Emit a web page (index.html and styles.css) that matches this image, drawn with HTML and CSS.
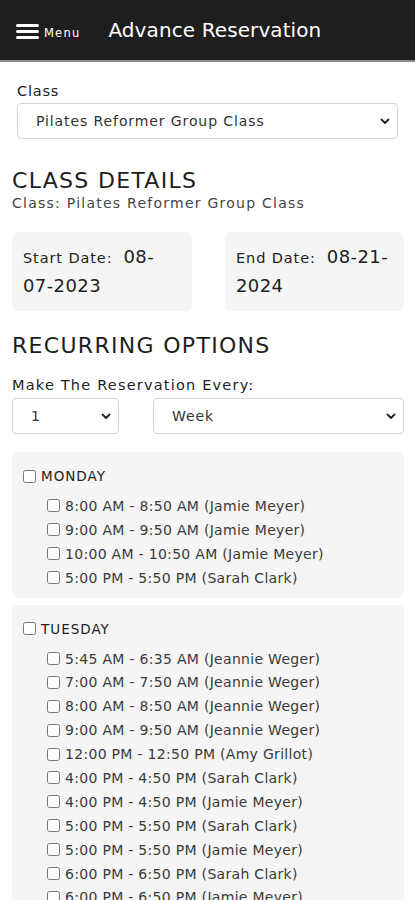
FILE: index.html
```html
<!DOCTYPE html>
<html lang="en">
<head>
  <meta charset="UTF-8" />
  <meta name="viewport" content="width=device-width, initial-scale=1.0" />
  <title>Advance Reservation</title>
  <link rel="stylesheet" href="styles.css">
</head>
<body>

  <header class="topbar">
    <div class="menu-btn">
      <svg class="burger" width="23" height="15" viewBox="0 0 23 15">
        <rect x="0" y="0" width="23" height="3" rx="1.5" fill="#fff"/>
        <rect x="0" y="6" width="23" height="3" rx="1.5" fill="#fff"/>
        <rect x="0" y="12" width="23" height="3" rx="1.5" fill="#fff"/>
      </svg>
      <span>Menu</span>
    </div>
    <h1>Advance Reservation</h1>
  </header>

  <main class="page">

    <div class="field">
      <label class="lbl">Class</label>
      <div class="select-wrap">
        <select class="sel">
          <option>Pilates Reformer Group Class</option>
        </select>
        <svg class="chev" width="10" height="7" viewBox="0 0 10 7"><path d="M1.5 1.5 L5 5 L8.5 1.5" fill="none" stroke="#222" stroke-width="1.8" stroke-linecap="round" stroke-linejoin="round"/></svg>
      </div>
    </div>

    <h2>CLASS DETAILS</h2>
    <p class="sub">Class: Pilates Reformer Group Class</p>

    <div class="dates">
      <div class="date-card"><span class="k">Start Date:</span>&nbsp; <span class="v">08-</span><span class="v">07-2023</span></div>
      <div class="date-card"><span class="k">End Date:</span>&nbsp; <span class="v">08-21-</span><span class="v">2024</span></div>
    </div>

    <h2 class="h-rec">RECURRING OPTIONS</h2>
    <p class="every">Make The Reservation Every:</p>
    <div class="every-row">
      <div class="select-wrap small">
        <select class="sel"><option>1</option></select>
        <svg class="chev" width="10" height="7" viewBox="0 0 10 7"><path d="M1.5 1.5 L5 5 L8.5 1.5" fill="none" stroke="#222" stroke-width="1.8" stroke-linecap="round" stroke-linejoin="round"/></svg>
      </div>
      <div class="select-wrap grow">
        <select class="sel"><option>Week</option></select>
        <svg class="chev" width="10" height="7" viewBox="0 0 10 7"><path d="M1.5 1.5 L5 5 L8.5 1.5" fill="none" stroke="#222" stroke-width="1.8" stroke-linecap="round" stroke-linejoin="round"/></svg>
      </div>
    </div>

    <section class="day">
      <label class="day-head"><input type="checkbox"> MONDAY</label>
      <ul class="slots">
        <li><label><input type="checkbox">8:00 AM - 8:50 AM (Jamie Meyer)</label></li>
        <li><label><input type="checkbox">9:00 AM - 9:50 AM (Jamie Meyer)</label></li>
        <li><label><input type="checkbox">10:00 AM - 10:50 AM (Jamie Meyer)</label></li>
        <li><label><input type="checkbox">5:00 PM - 5:50 PM (Sarah Clark)</label></li>
      </ul>
    </section>

    <section class="day">
      <label class="day-head"><input type="checkbox"> TUESDAY</label>
      <ul class="slots">
        <li><label><input type="checkbox">5:45 AM - 6:35 AM (Jeannie Weger)</label></li>
        <li><label><input type="checkbox">7:00 AM - 7:50 AM (Jeannie Weger)</label></li>
        <li><label><input type="checkbox">8:00 AM - 8:50 AM (Jeannie Weger)</label></li>
        <li><label><input type="checkbox">9:00 AM - 9:50 AM (Jeannie Weger)</label></li>
        <li><label><input type="checkbox">12:00 PM - 12:50 PM (Amy Grillot)</label></li>
        <li><label><input type="checkbox">4:00 PM - 4:50 PM (Sarah Clark)</label></li>
        <li><label><input type="checkbox">4:00 PM - 4:50 PM (Jamie Meyer)</label></li>
        <li><label><input type="checkbox">5:00 PM - 5:50 PM (Sarah Clark)</label></li>
        <li><label><input type="checkbox">5:00 PM - 5:50 PM (Jamie Meyer)</label></li>
        <li><label><input type="checkbox">6:00 PM - 6:50 PM (Sarah Clark)</label></li>
        <li><label><input type="checkbox">6:00 PM - 6:50 PM (Jamie Meyer)</label></li>
      </ul>
    </section>

  </main>

</body>
</html>
```

FILE: styles.css
```css
  /* Base */
  * {
    margin: 0;
    padding: 0;
    box-sizing: border-box;
  }

  body {
    font-family: 'DejaVu Sans', 'Noto Sans', sans-serif;
    background: #fff;
    color: #222;
  }

  /* Barra superior */
  .topbar {
    height: 62px;
    background: #1f1e1e;
    border-bottom: 2px solid #8a8a8a;
    display: flex;
    align-items: center;
    padding: 0 16px;
    color: #fff;
  }

  .menu-btn {
    display: flex;
    align-items: flex-end;
    gap: 5px;
    margin-top: 2px;
  }

  .menu-btn span {
    font-size: 11.5px;
    line-height: 11px;
    letter-spacing: 1.2px;
  }

  .topbar h1 {
    font-size: 20px;
    font-weight: normal;
    letter-spacing: 0.1px;
    margin-left: 28px;
  }

  .page {
    padding: 0 11px 0 12px;
  }

  /* Selects */
  .field {
    padding: 20px 6px 0 5px;
  }

  .lbl {
    display: block;
    font-size: 14.5px;
    line-height: 18px;
    letter-spacing: 0.8px;
    margin-bottom: 3px;
  }

  .select-wrap {
    position: relative;
  }

  .sel {
    appearance: none;
    -webkit-appearance: none;
    width: 100%;
    height: 36px;
    border: 1px solid #d6d6d6;
    border-radius: 4px;
    background: #fff;
    font-family: inherit;
    font-size: 14px;
    letter-spacing: 0.9px;
    color: #333;
    padding: 0 30px 0 18px;
  }

  .chev {
    position: absolute;
    right: 8px;
    top: 15px;
    pointer-events: none;
  }

  h2 {
    font-size: 22px;
    font-weight: normal;
    line-height: 26px;
    letter-spacing: 1.3px;
    margin-top: 29px;
    color: #1d1d1d;
  }

  .sub {
    font-size: 14px;
    line-height: 18px;
    letter-spacing: 1.25px;
    color: #444;
  }

  /* Fechas */
  .dates {
    display: grid;
    grid-template-columns: 180px 179px;
    justify-content: space-between;
    margin-top: 20px;
  }

  .date-card {
    background: #f5f5f5;
    border-radius: 6px;
    height: 79px;
    padding: 11px 11px;
    font-size: 14.5px;
    line-height: 27px;
    letter-spacing: 0.9px;
  }

  .date-card .v {
    font-size: 18px;
    letter-spacing: 0.4px;
  }

  .h-rec {
    margin-top: 22px;
  }

  .every {
    font-size: 14.5px;
    line-height: 18px;
    letter-spacing: 1.2px;
    margin-top: 17px;
  }

  .every-row {
    display: flex;
    gap: 34px;
    margin-top: 4px;
  }

  .every-row .small {
    width: 107px;
  }

  .every-row .grow {
    flex: 1;
  }

  .every-row .sel {
    padding-left: 18px;
  }

  /* Dias */
  .day {
    background: #f5f5f5;
    border-radius: 6px;
    margin-top: 18px;
    padding: 14px 11px 8px;
  }

  .day + .day {
    margin-top: 7px;
  }

  .day-head {
    display: flex;
    align-items: center;
    font-size: 13.5px;
    line-height: 20px;
    letter-spacing: 1px;
  }

  .day-head input {
    margin: 0 5px 0 0;
  }

  .slots {
    list-style: none;
    margin-top: 8px;
    padding-left: 24px;
  }

  .slots li {
    height: 23.9px;
    display: flex;
    align-items: center;
  }

  .slots label {
    display: flex;
    align-items: center;
    font-size: 14px;
    letter-spacing: 0.3px;
    color: #3a3a3a;
  }

  .slots input {
    margin: 0 5px 0 0;
  }
```
